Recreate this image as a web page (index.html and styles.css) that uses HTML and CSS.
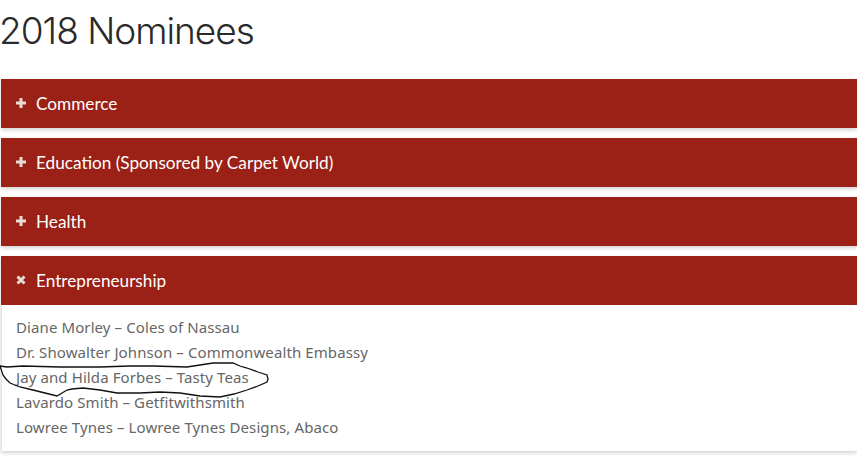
FILE: index.html
```html
<!DOCTYPE html>
<html lang="en">
<head>
  <meta charset="UTF-8" />
  <title>2018 Nominees</title>
  <link rel="stylesheet" href="styles.css">
</head>
<body>
  <h1 class="page-title">2018 Nominees</h1>

  <div class="accordion">
    <div class="panel">
      <div class="panel-head">
        <svg class="panel-icon" viewBox="0 0 10 10"><path d="M5 0V10M0 5H10" /></svg>
        Commerce
      </div>
    </div>
    <div class="panel">
      <div class="panel-head">
        <svg class="panel-icon" viewBox="0 0 10 10"><path d="M5 0V10M0 5H10" /></svg>
        Education (Sponsored by Carpet World)
      </div>
    </div>
    <div class="panel">
      <div class="panel-head">
        <svg class="panel-icon" viewBox="0 0 10 10"><path d="M5 0V10M0 5H10" /></svg>
        Health
      </div>
    </div>
    <div class="panel">
      <div class="panel-head">
        <svg class="panel-icon" viewBox="0 0 10 10"><path d="M1.5 1.5L8.5 8.5M8.5 1.5L1.5 8.5" /></svg>
        Entrepreneurship
      </div>
      <div class="panel-body">
        <p>Diane Morley – Coles of Nassau</p>
        <p>Dr. Showalter Johnson – Commonwealth Embassy</p>
        <p>Jay and Hilda Forbes – Tasty Teas</p>
        <p>Lavardo Smith – Getfitwithsmith</p>
        <p>Lowree Tynes – Lowree Tynes Designs, Abaco</p>
      </div>
    </div>
  </div>

  <!-- Hand drawn circle -->
  <svg class="scribble" width="857" height="459" viewBox="0 0 857 459">
    <path d="M0 366 L7 367 L23 366 L60 367 L100 367 L130 366 L153 366 L187 367 L200 365 L213 363 L233 363 L240 366 L247 368 L258 372 L267 375 L268 379 L267 382 L258 386 L247 390 L234 394 L220 397 L200 396 L180 393 L160 392 L140 393 L117 393 L100 390 L83 388 L72 389 L67 390 L57 396 L45 393 L33 390 L20 387 L10 383 L6 379 L3 375 Z" />
  </svg>
</body>
</html>
```

FILE: styles.css
```css
body {
  margin: 0;
  background: #fff;
  font-family: "Noto Sans", sans-serif;
  overflow: hidden;
}

.page-title {
  margin: 0 0 0 -1px;
  padding: 9px 0 0 0;
  height: 68px;
  box-sizing: border-box;
  font-family: Inter, sans-serif;
  font-size: 37px;
  font-weight: 300;
  line-height: 44px;
  letter-spacing: -1px;
  color: #2a2a2a;
}

.accordion {
  margin-top: 11px;
  padding-left: 1px;
}

.panel {
  margin-bottom: 10px;
  box-shadow: 0 2px 4px rgba(0, 0, 0, 0.18);
}

.panel-head {
  display: flex;
  align-items: center;
  height: 49px;
  padding-left: 15px;
  background: #9b2015;
  color: #fff;
  font-family: Lato, sans-serif;
  font-size: 17.2px;
}

.panel-icon {
  width: 10px;
  height: 10px;
  margin-right: 10px;
  margin-top: -2px;
}

.panel-icon path {
  fill: none;
  stroke: #e8dcd6;
  stroke-width: 3;
}

.panel-body {
  height: 146px;
  box-sizing: border-box;
  padding: 10px 15px 0 14px;
  border-left: 1px solid #e4e4e4;
  color: #666;
  font-size: 15px;
  letter-spacing: 0.1px;
}

.panel-body p {
  margin: 0;
  height: 25px;
  line-height: 25px;
}

.scribble {
  position: absolute;
  top: 0;
  left: 0;
  pointer-events: none;
}

.scribble path {
  fill: none;
  stroke: #111;
  stroke-width: 1.3;
}
```
